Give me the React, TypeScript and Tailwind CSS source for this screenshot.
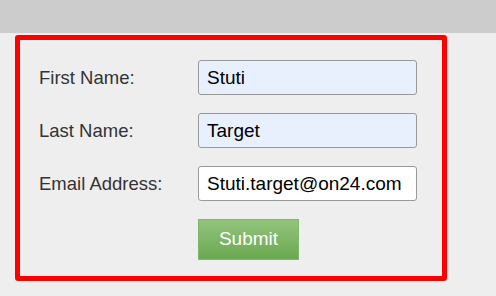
import React from "react";

const rows = [
    {label: "First Name:", value: "Stuti", filled: true},
    {label: "Last Name:", value: "Target", filled: true},
    {label: "Email Address:", value: "Stuti.target@on24.com", filled: false},
];

const App = () => {
    return <div className="w-[496px] h-[296px] bg-[#eeeeee] overflow-hidden font-['Liberation_Sans',Arial,sans-serif]">
        <div className="h-[33px] bg-[#cccccc]"/>
        <div className="ml-[15px] mt-[2px] w-[432px] h-[246px] border-[5px] border-[#ff0000] rounded-[3px] pt-[20px] pl-[19px]">
            <div className="flex flex-col gap-[18px]">
                {rows.map((row) =>
                    <div key={row.label} className="flex items-center h-[35px]">
                        <span className="w-[159px] text-[18.5px] text-[#333333]">{row.label}</span>
                        <input
                            className={"w-[219px] h-[35px] border border-[#999999] rounded-[3px] pl-[8px] text-[19px] text-black outline-none " +
                                (row.filled ? "bg-[#e8f0fe]" : "bg-white")}
                            defaultValue={row.value}/>
                    </div>
                )}
                <div className="pl-[159px]">
                    <button
                        className="w-[101px] h-[41px] bg-gradient-to-b from-[#93c47d] to-[#6aa84f] border border-[#7fb866] text-white text-[19px]">
                        Submit
                    </button>
                </div>
            </div>
        </div>
    </div>
}

export default App
